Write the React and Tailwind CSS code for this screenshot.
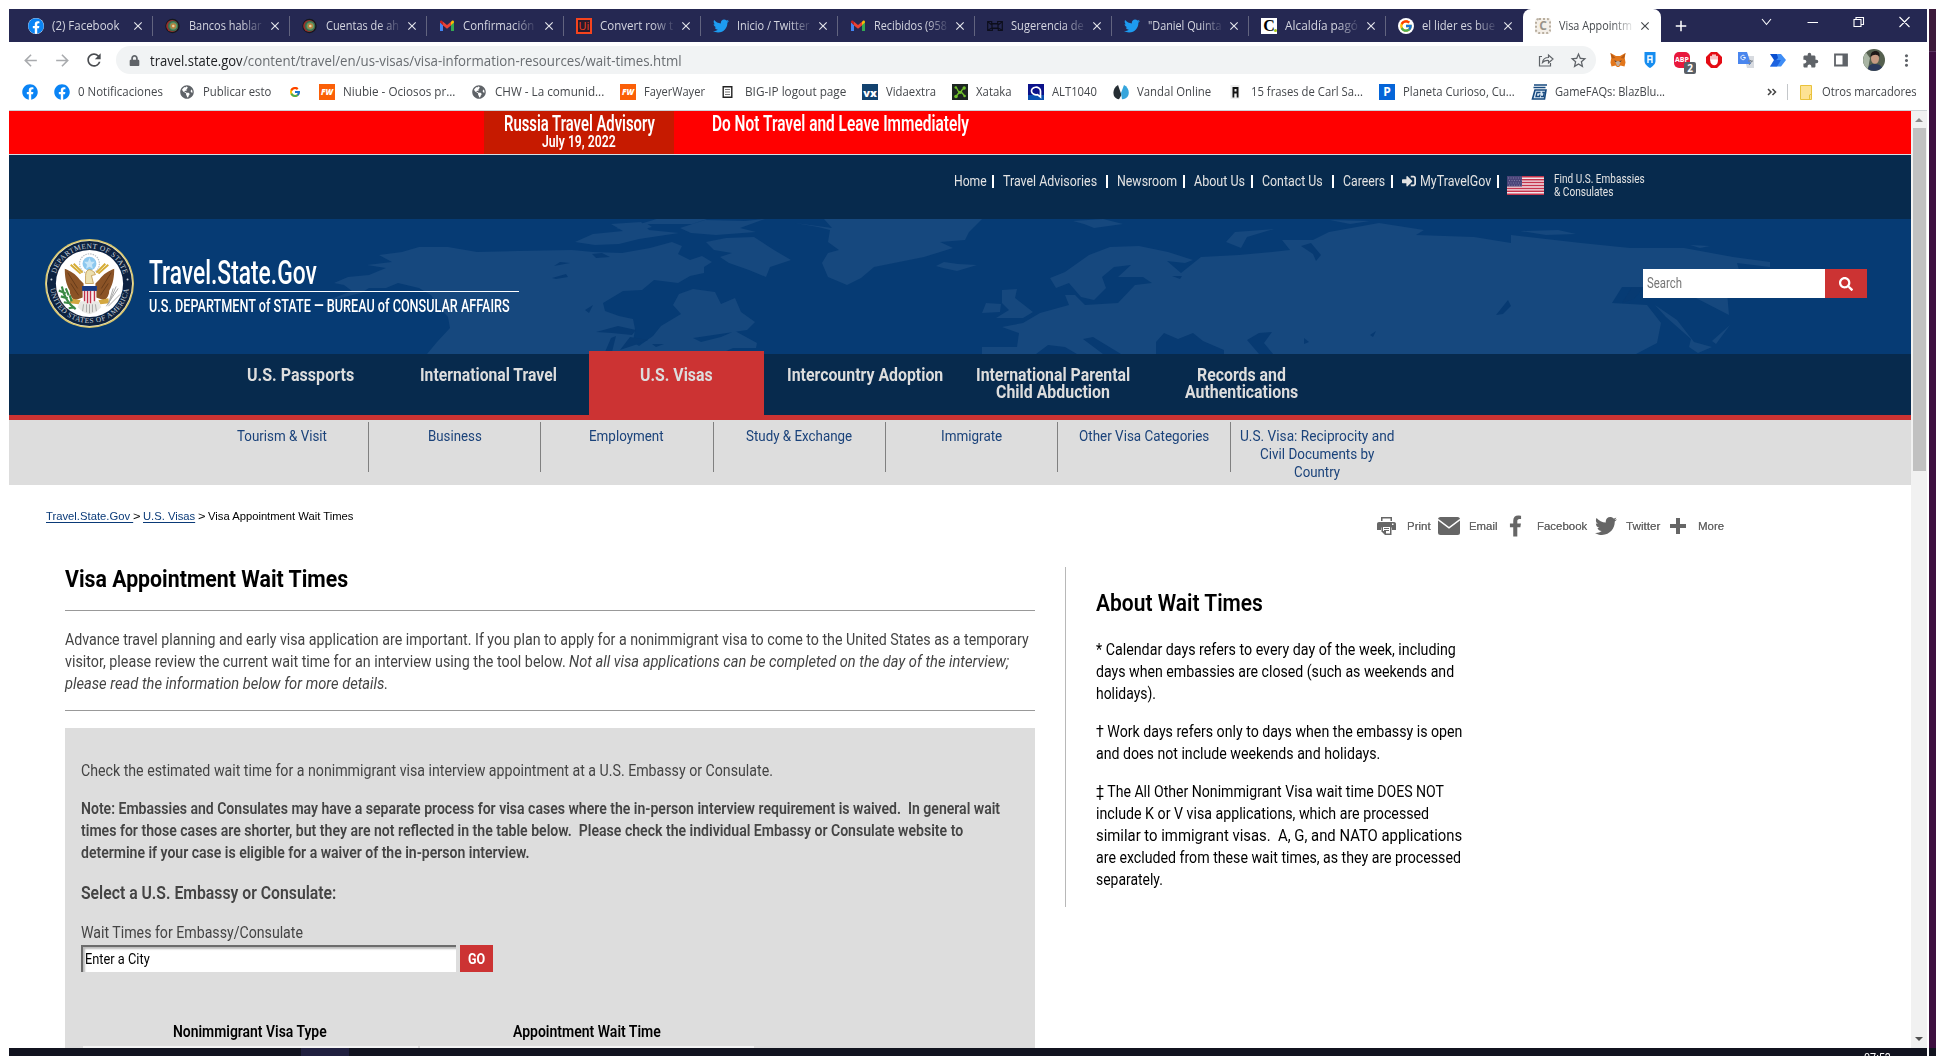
import React, { useLayoutEffect, useRef } from "react";
import {
  FaFacebook, FaTwitter, FaFacebookF, FaSearch, FaSignInAlt, FaLock, FaGlobeAmericas,
} from "react-icons/fa";
import { FcGoogle } from "react-icons/fc";
import {
  MdArrowBack, MdArrowForward, MdRefresh, MdClose, MdExtension, MdStarBorder, MdMoreVert, MdAdd,
} from "react-icons/md";

/* Condenses a line of text so that it fills the width of its box. */
function Fit({ className = "", children }) {
  const outer = useRef(null);
  const inner = useRef(null);
  useLayoutEffect(() => {
    const k = outer.current.clientWidth / inner.current.offsetWidth;
    inner.current.style.transform = `scaleX(${k})`;
  }, []);
  return (
    <span ref={outer} className={"block shrink-0 whitespace-pre " + className}>
      <span ref={inner} className="inline-block origin-left whitespace-pre">{children}</span>
    </span>
  );
}

/* ---------- small icons ---------- */
const Fb = () => (
  <span className="block size-4 rounded-full bg-white"><FaFacebook className="size-4 text-[#0a84f5]" /></span>
);
const Target = () => (
  <svg viewBox="0 0 16 16" className="size-4">
    <circle cx="7.5" cy="8" r="7.2" fill="#15171d" />
    <circle cx="7.2" cy="8" r="6" fill="#9c2f2c" />
    <circle cx="8" cy="8" r="5.2" fill="#3b6b4c" />
    <circle cx="8.3" cy="8" r="3.800" fill="#5f9a6a" />
    <circle cx="8.3" cy="8" r="2.800" fill="#b8803e" />
    <circle cx="8.3" cy="8" r="1.300" fill="#ecd0a0" />
  </svg>
);
const Gmail = () => (
  <svg viewBox="0 0 16 16" className="size-4">
    <path d="M1 4v9h3V7z" fill="#4285f4" />
    <path d="M15 4v9h-3V7z" fill="#34a853" />
    <path d="M1 4.5 4 7.2V3.8L3 2.8C2 2.2 1 3 1 4z" fill="#c5221f" />
    <path d="M15 4.5 12 7.2V3.8l1-1c1-.6 2 .2 2 1.2z" fill="#fbbc04" />
    <path d="M4 3.8 8 7l4-3.2v3.8L8 10.8 4 7.6z" fill="#ea4335" />
  </svg>
);
const Ui = () => (
  <span className="flex size-4 items-center justify-center border-2 border-[#f5441e] bg-[#2a1a2c] text-[11px] leading-none font-medium text-[#f5441e]">Ui</span>
);
const Tw = () => <FaTwitter className="size-4 text-[#1d9bf0]" />;
const Box = () => (
  <svg viewBox="0 0 16 16" className="size-4" fill="none" stroke="#0d0e1c" strokeWidth="1.200">
    <path d="M.7 3.500h4v2h6v-2h4.600v9h-4v-2h-6v2h-4.600z" /><path d="M5 6h6v4H5zM1 4l4 3M15 4l-4 3M1 12l4-2M15 12l-4-2" />
  </svg>
);
const CIcon = () => (
  <span className="relative flex size-4 items-center justify-center bg-white font-['Liberation_Serif'] text-[16px] leading-none font-bold text-black">
    C<i className="absolute right-0 bottom-0.5 size-[3px] rounded-full bg-[#a8c814]" />
  </span>
);
const GRound = () => (
  <span className="flex size-4 items-center justify-center rounded-full bg-white"><FcGoogle className="size-3.5" /></span>
);
const SealIcon = () => (
  <span className="flex size-4 items-center justify-center rounded-sm border-2 border-dotted border-[#b8ae9f] bg-[#f4efe8] text-[12px] leading-none font-bold text-[#989389]">C</span>
);
const Globe = () => <FaGlobeAmericas className="size-3.5 text-[#5f6368]" />;
const Fw = () => (
  <span className="flex size-4 items-center justify-center bg-[#fb5f07] text-[8px] font-black text-white italic">FW</span>
);
const Doc = () => (
  <svg viewBox="0 0 16 16" className="size-4" fill="none" stroke="#222" strokeWidth="1.400">
    <path d="M2.200 2.700h8.600v10.600H2.200z" /><path d="M4 5.500h5M4 8h5M4 10.500h5" stroke="#777" strokeWidth="1" />
  </svg>
);
const Vx = () => (
  <span className="flex size-4 items-center justify-center bg-[#12426f] text-[11px] leading-none font-black text-white">vx</span>
);
const Xat = () => (
  <svg viewBox="0 0 16 16" className="size-4">
    <path d="M0 0h16v16H0z" fill="#1c2422" />
    <path d="M4 3.500C6 5 5 7 7.500 8L4 12.500M12 4c-1.500 1-2.500 2-3 4.500 1.500 0 2 1.500 3.600 3.500" fill="none" stroke="#6fc02c" strokeWidth="1.300" />
    <g fill="#6fc02c"><circle cx="3.800" cy="3.500" r="1.300" /><circle cx="12.200" cy="4" r="1.700" /><circle cx="4" cy="12.500" r="1.800" /><circle cx="12.600" cy="12" r="1.300" /><circle cx="8" cy="8.300" r="1.600" /></g>
  </svg>
);
const Alt = () => (
  <svg viewBox="0 0 16 16" className="size-4">
    <path d="M0 0h16v16H0z" fill="#0b128a" /><path d="M0 11h16v5H0z" fill="#0a4fb0" />
    <path d="M12.500 13V7a4.500 3.800 0 1 0-3 3.600z" fill="none" stroke="#fff" strokeWidth="1.700" />
  </svg>
);
const Vandal = () => (
  <svg viewBox="0 0 16 16" className="size-4">
    <path d="M5 1C1 3-.5 8 1 12c1 2 3 3 5 3.300L8.500 11z" fill="#252d33" /><path d="M11 1c4 2 6 7 4 11-1 2-3 3-6 3.300L8 9z" fill="#35a5dc" />
  </svg>
);
const AIcon = () => (
  <svg viewBox="0 0 16 16" className="size-4"><path d="M3.500 1h9v14h-9z" fill="#eee" /><path d="M5.500 3h6v10.500H9.700V9.500H7.300v4H5.500z" fill="#111" /><path d="M7.500 5h2v2.500h-2z" fill="#eee" /></svg>
);
const PIcon = () => (
  <span className="flex size-4 items-center justify-center bg-[#0565d8] text-[12px] leading-none font-bold text-white">P</span>
);
const Gf = () => (
  <svg viewBox="0 0 16 16" className="size-4" fill="none" stroke="#17497f" strokeWidth="1.600">
    <path d="M3 1h13M2.500 3.500h12" /><path d="M4 6h11l-1.500 9H1.500z" fill="#dbe8f4" /><path d="M9.500 8.500H6L5 12.500h3.500l.5-2M10 12.500h2.500l.8-4h-2" strokeWidth="1.300" />
  </svg>
);

/* ---------- browser chrome ---------- */
const TABS = [
  ["(2) Facebook", Fb, true],
  ["Bancos hablar", Target],
  ["Cuentas de ah", Target],
  ["Confirmación", Gmail, false, true],
  ["Convert row t", Ui],
  ["Inicio / Twitter", Tw],
  ["Recibidos (958", Gmail],
  ["Sugerencia de", Box],
  ["\"Daniel Quinta", Tw],
  ["Alcaldía pagó", CIcon],
  ["el lider es bue", GRound],
];

function TabStrip() {
  return (
    <div className="flex h-[33px] bg-[#252852] pl-[7px] text-[12px] leading-[33px] text-[#d5d6e0]">
      {TABS.map(([title, Icon, short, mid], i) => (
        <div key={title} className="flex w-[137px] items-center pl-3">
          <Icon />
          <Fit className={"ml-2 [mask-image:linear-gradient(90deg,#000_72%,#0002)] " + (short ? "w-[68px] [mask-image:none]" : mid ? "w-[71px]" : "w-[73px]")}>{title}</Fit>
          <MdClose className={"size-[14px] text-[#e4e5ec] " + (short ? "ml-[11px]" : mid ? "ml-2" : "ml-1.5")} />
          {i < 10 && <i className="ml-auto h-5 w-px bg-[#62647f]" />}
        </div>
      ))}
      <div className="flex h-full w-[138px] items-center rounded-t-lg bg-white pl-3 text-[#45494d]">
        <SealIcon />
        <Fit className="ml-2 w-[73px] [mask-image:linear-gradient(90deg,#000_72%,#0002)]">Visa Appointm</Fit>
        <MdClose className="ml-1.5 size-[14px]" />
      </div>
      <MdAdd className="mt-2 ml-[11px] size-[18px] text-white" />
      <svg viewBox="0 0 164 33" className="ml-[68px] h-[33px] w-[164px]" fill="none" stroke="#fff" strokeWidth="1.100">
        <path d="m4 10 4.500 5.500L13 10M49.500 13.500h10.500M96 10.500h7v7h-7zM98 10.500V8.500h7.500v7h-2.500M141.500 8l10 10M151.500 8l-10 10" />
      </svg>
    </div>
  );
}

function Extensions() {
  return (
    <div className="ml-3.5 flex items-center gap-4">
      <svg viewBox="0 0 16 16" className="size-4">
        <path d="M.5 1 6 4h4l5.500-3-.8 5 .8 4.500-1 4-4-1L9 15H7l-1.500-1.500-4 1-1-4L1.300 6z" fill="#e2761b" />
        <path d="m.5 1 5 5-3.500.5zM15.500 1l-5 5 3.500.5z" fill="#b85a12" /><path d="M5.500 10 8 9l2.500 1L9 14H7z" fill="#c0ad9e" /><path d="m4 8.500 2.500.5L6 10zM12 8.500 9.500 9l.5 1z" fill="#233447" />
      </svg>
      <svg viewBox="0 0 16 16" className="size-4"><path d="M2.500 0h11v9c0 3-3 5.500-5.500 7-2.500-1.500-5.500-4-5.500-7z" fill="#168df0" /><path d="M6 11V4h4v7M6 7.500h4" fill="none" stroke="#fff" strokeWidth="1.400" /></svg>
      <div className="relative size-4">
        <span className="flex size-4 items-center justify-center rounded-[5px] bg-[#e8173c] text-[7px] font-bold text-white">ABP</span>
        <span className="absolute top-2.5 left-2.5 flex h-3 w-3 items-center justify-center rounded-xs bg-[#5a5f66] text-[10px] leading-none font-bold text-white">2</span>
      </div>
      <svg viewBox="0 0 16 16" className="size-4"><path d="M5 0h6l5 5v6l-5 5H5l-5-5V5z" fill="#e40b14" /><path d="M5 8V4.500M7 8V3M9 8V3M11 9V4.500" stroke="#fff" strokeWidth="1.500" strokeLinecap="round" /><path d="M4.300 7.500h7.400V10c0 2-1.500 3.200-3.400 3.200S4.300 11.500 4.300 9z" fill="#fff" /></svg>
      <svg viewBox="0 0 16 16" className="size-4"><path d="M6 4h10v12H9z" fill="#d8dbe0" /><path d="M0 0h9l4 12H0z" fill="#4a86ee" /><path d="M7.500 5.500H5.300M7.300 5.500a2.200 2.200 0 1 1-.8-1.700" stroke="#fff" fill="none" /><path d="M10 9h5M12.500 8v1M11 13l3-4" stroke="#7a828c" /></svg>
      <svg viewBox="0 0 16 16" className="size-4"><path d="M0 2h7l4 6H4z" fill="#0a4fd0" /><path d="M7 2h4l5 6-5 6.500H0L8 6z" fill="#3f8df5" /><path d="M4 8h7l-4 6.500H0z" fill="#1d63e0" /></svg>
      <MdExtension className="size-[17px] text-[#5f6368]" />
      <svg viewBox="0 0 16 16" className="-ml-0.5 size-4"><path d="M2 2.500h12v11H2z" fill="none" stroke="#5f6368" strokeWidth="1.800" /><path d="M9.500 2.500H14v11H9.500z" fill="#5f6368" /></svg>
      <svg viewBox="0 0 22 22" className="-mx-0.5 size-[22px]">
        <circle cx="11" cy="11" r="11" fill="#55604f" /><path d="M3 3.500A11 11 0 0 0 5 20L7 9z" fill="#a9b5a4" />
        <path d="M5 20c1-5 4-5 7-5s6 1 7 3.500A11 11 0 0 1 5 20z" fill="#2c3a5c" /><ellipse cx="12" cy="9.500" rx="4" ry="5.300" fill="#c79b83" /><path d="M7.500 8c0-4 2-6 5-6s4.500 2 4 6c-2-3-6-3-9 0z" fill="#1f1a19" />
      </svg>
      <MdMoreVert className="-ml-[2px] size-[19px] text-[#5f6368]" />
    </div>
  );
}

function Toolbar() {
  return (
    <div className="flex h-[36px] items-center bg-white">
      <MdArrowBack className="ml-3 size-[19px] text-[#a9abae]" />
      <MdArrowForward className="ml-[13px] size-[19px] text-[#a9abae]" />
      <MdRefresh className="ml-3 size-5 text-[#4a4d51]" />
      <div className="ml-3 flex h-7 w-[1480px] items-center rounded-full bg-[#f1f3f4] pl-3 text-[14px]">
        <FaLock className="ml-px size-[11px] text-[#5f6368]" />
        <Fit className="ml-[10px] w-[93px] text-[#202124]">travel.state.gov</Fit>
        <Fit className="w-[439px] text-[#686c70]">/content/travel/en/us-visas/visa-information-resources/wait-times.html</Fit>
        <svg viewBox="0 0 16 16" className="ml-auto size-4" fill="none" stroke="#5f6368" strokeWidth="1.200">
          <path d="M4 4.500H1.500v9.500h11V11M4.500 10.500C5 7 7 5.500 10.500 5.500V3L15 7l-4.500 4V8.500C8 8.300 6 9 4.500 10.500z" />
        </svg>
        <MdStarBorder className="mr-2 ml-[15px] size-[19px] text-[#5f6368]" />
      </div>
      <Extensions />
    </div>
  );
}

function Mark({ icon: Icon, className, children }) {
  return (
    <div className="flex shrink-0 items-center">
      <span className="flex size-4 items-center justify-center"><Icon /></span>
      {children && <Fit className={"ml-2 " + className}>{children}</Fit>}
    </div>
  );
}

function Bookmarks() {
  return (
    <div className="flex h-[33px] items-center gap-4 border-b border-[#cdd3d6] bg-white pb-1 pl-[13px] text-[12px] text-[#44474b]">
      <Mark icon={Fb} />
      <Mark icon={Fb} className="w-[85px]">0 Notificaciones</Mark>
      <Mark icon={Globe} className="w-[68px]">Publicar esto</Mark>
      <Mark icon={FcGoogle} />
      <Mark icon={Fw} className="w-[112px]">Niubie - Ociosos pr...</Mark>
      <Mark icon={Globe} className="w-[109px]">CHW - La comunid...</Mark>
      <Mark icon={Fw} className="w-[61px]">FayerWayer</Mark>
      <Mark icon={Doc} className="w-[101px]">BIG-IP logout page</Mark>
      <Mark icon={Vx} className="w-[50px]">Vidaextra</Mark>
      <Mark icon={Xat} className="w-[36px]">Xataka</Mark>
      <Mark icon={Alt} className="w-[45px]">ALT1040</Mark>
      <Mark icon={Vandal} className="w-[74px]">Vandal Online</Mark>
      <Mark icon={AIcon} className="w-[112px]">15 frases de Carl Sa...</Mark>
      <Mark icon={PIcon} className="w-[112px]">Planeta Curioso, Cu...</Mark>
      <Mark icon={Gf} className="w-[110px]">GameFAQs: BlazBlu...</Mark>
      <div className="mr-2.5 ml-auto flex items-center">
        <svg viewBox="0 0 10 8" className="h-2 w-2.5" fill="none" stroke="#444" strokeWidth="1.500"><path d="m1 1 3 3-3 3M5.500 1l3 3-3 3" /></svg>
        <i className="ml-2.5 h-4 w-px bg-[#c4c7ca]" />
        <svg viewBox="0 0 12 15" className="ml-3 h-[15px] w-3"><path d="M.5.5h11v14H.5z" fill="#fde293" stroke="#e9c23c" /><path d="M9.500 14v-4l2-1" fill="none" stroke="#e9c23c" /></svg>
        <Fit className="ml-2.5 w-[95px]">Otros marcadores</Fit>
      </div>
    </div>
  );
}

/* ---------- site header ---------- */
function Banner() {
  return (
    <div className="flex h-[44px] border-b border-[#d8dfe4] bg-[#ff0000] font-semibold text-white">
      <div className="ml-[475px] flex w-[190px] flex-col items-center bg-[#c61a00]">
        <Fit className="mt-[3px] w-[151px] text-[21.500px] leading-[20px]">Russia Travel Advisory</Fit>
        <Fit className="w-[74px] text-[16.500px] leading-[15px]">July 19, 2022</Fit>
      </div>
      <Fit className="mt-[3px] ml-[38px] w-[257px] text-[21.500px] leading-[20px]">Do Not Travel and Leave Immediately</Fit>
    </div>
  );
}

const Bar = () => <i className="mt-[3px] h-[13px] w-[2px] shrink-0 bg-white" />;

function Flag() {
  return (
    <svg viewBox="0 0 37 19" className="mt-1 ml-2 h-[19px] w-[37px]" preserveAspectRatio="none">
      <path d="M0 0h37v19H0z" fill="#f3e6ea" />
      <path d="M0 .8h37M0 3.700h37M0 6.600h37M0 9.500h37M0 12.400h37M0 15.300h37M0 18.200h37" stroke="#c6334c" strokeWidth="1.500" />
      <path d="M0 0h15v10.500H0z" fill="#4a4478" />
      <path d="M1 2h14M2 4.500h13M1 7h14M2 9.200h13" stroke="#8d88b0" strokeWidth=".8" strokeDasharray="1 1.500" />
    </svg>
  );
}

function TopLinks() {
  return (
    <div className="flex h-16 items-start bg-[#072a4d] pt-[17px] pl-[945px] text-[14px] leading-[19px] text-[#e3e3e3]">
      <Fit className="mr-[5px] w-[33px]">Home</Fit><Bar />
      <Fit className="mr-[9px] ml-[9px] w-[94px]">Travel Advisories</Fit><Bar />
      <Fit className="mr-1.5 ml-[9px] w-[60px]">Newsroom</Fit><Bar />
      <Fit className="mr-1.5 ml-[9px] w-[51px]">About Us</Fit><Bar />
      <Fit className="mr-[9px] ml-[9px] w-[61px]">Contact Us</Fit><Bar />
      <Fit className="mr-1.5 ml-[9px] w-[42px]">Careers</Fit><Bar />
      <FaSignInAlt className="mt-0.5 mr-1 ml-[9px] size-[14px]" />
      <Fit className="mr-1.5 w-[71px]">MyTravelGov</Fit><Bar />
      <Flag />
      <div className="ml-2.5 text-[12px] leading-[13px]">
        <Fit className="mt-px w-[91px]">Find U.S. Embassies</Fit>
        <Fit className="w-[59px]">&amp; Consulates</Fit>
      </div>
    </div>
  );
}

function WorldMap() {
  return (
    <svg viewBox="9 219 1902 135" className="absolute inset-0 h-full w-full" fill="#16487e">
      <path d="M427 354l10-12 13-14-2-11-9-10-8-12-12-7-21-5-12 5-17 0-8 5-38 9 29-11-8-6-10-2 14-6 21-2 17-7-19-3 25-3-13-7 23-3 17-5 29 0 29 5 41-1 54-1 21 2 29 1 28-5 22-6 10 4-4 8 12 6 12-4 10 6-8 5 0 6-14 3-12 7-24-3-12 10-19 1-20 12 2 8 14 5 14 3 2 10-2 13 6 4 14-10 8-10 10-6 10-6-8-9 6-11 14-5 22 3 6 12 14-6 6 14 14 10-8 8-54 8 8 4 20-5 14-6 22 12-1 5-23 0-25 11-20 2-20 5-6 4z" />
      <path d="M575 242l18-8 30-3-12-7 30-2 8 8 30 3-40 6-20 5-24 1zM640 224l20-6h50l-18 6zM680 228l25-8 40 1 20-2-25 9 16 4-40 3-25-2zM616 228l30-5 6 4-20 5z" />
      <path d="M706 242l20-4 28-1 20 13 17 10-21 7-4 10-17-7-20-7-9-6 12-4-18-3z" />
      <path d="M795 223l37 5-8-9h158l-13 13-4 8-25 2 13 6-29 9-25 5-25 5-13 11-14 7-19-8-6-14 6-10 11-3-11-8 2-12-12-3z" />
      <path d="M936 266l8-4 14 2 19 1-20 6-14-3zM1073 221l30-2 20 5-29 4-10-4zM1226 242l9-10 39-3-27 8-6 11z" />
      <path d="M1002 290l15-1-2 9 18 14-10 6-27 0 13-8-7-7zM982 313l4-10 15 1-1 8z" />
      <path d="M982 354v-7h35l2-14-17-6 21-4 17-10 29-8-4-10h10l10 10 33-2 17-18 17-2-9-6-25 0 13-12-17 2-12 10 4 11-12 12-13-3-12-14-13 5-6-10 15-6 24-17 21-8 29-1 29 6 25 8-8 3-18-2 14 12 20-16 38-2 33-3 18-2-8-10 31 0 16-8 50-9 45 7-8 5 58 2 37 6 0-8 70 8 49 5 54 0 49 9 37 5v5l-33-4 2 7-12 22 2 23-33-17-62-11-12 0-10 16 35 2 14 18-4 20-21 11z" />
      <path d="M1655 305l22 15 17 22 18 5-14 6-9-6 2-8-25-22zM1712 341l18-16-14 19zM1520 231l38-1 18 4-30 1zM1330 220l40 1-20 3zM1690 245l20 1-10 2z" />
      <g fill="#073a72">
        <path d="M1156 354l0-12 8-9 14 6 15-6 10 8 21 9v4zM1247 340l12-7 13-1-8 11 9 11h-14zM1036 354l12-9 17 2 12 7zM1083 339l10-2 28 17h-18zM1496 315l12-15 3 6-8 8zM1304 338l5 4-5 2zM1370 335l6-4-3 6zM1172 276l10 0-2 3zM1311 243l10 12-5 6-3-7-12-8z" />
        <path d="M1644 287l-12 0-10 16 12-4zM596 332l22-6 18 4-4 5-20-2zM605 352l6-14 5-2-4 16zM620 350l10-13 18 3-10 4zM585 310l8-5-4 8zM552 278l14-4 2 3-12 2zM560 262l10 1-16 3zM592 254l10-1 8 4-14 1zM652 344l12 0-8 3z" />
      </g>
    </svg>
  );
}

function Seal() {
  return (
    <svg viewBox="0 0 90 90" className="size-[89px]">
      <defs>
        <path id="arcTop" d="M9.500 45a35.500 35.500 0 0 1 71 0" />
        <path id="arcBottom" d="M5 45a40 40 0 0 0 80 0" />
      </defs>
      <circle cx="45" cy="45" r="45" fill="#d8c56a" />
      <circle cx="45" cy="45" r="43.600" fill="#f4f0d0" />
      <circle cx="45" cy="45" r="43" fill="#0d2240" />
      <circle cx="45" cy="45" r="34" fill="#fff" />
      <g fill="#c9d2dc" fontFamily="Liberation Serif" fontSize="7.500">
        <text><textPath href="#arcTop" startOffset="10" textLength="92">DEPARTMENT OF STATE</textPath></text>
        <text><textPath href="#arcBottom" startOffset="5" textLength="115">UNITED STATES OF AMERICA</textPath></text>
        <circle cx="6.500" cy="41" r="1" /><circle cx="83.500" cy="41" r="1" />
      </g>
      <circle cx="45" cy="25" r="10" fill="none" stroke="#b9bec3" strokeWidth="1.200" strokeDasharray="1.500 1" />
      <circle cx="45" cy="25" r="7" fill="#8cc8ef" />
      <path d="M45 19l1.500 4h4l-3 3 1 4-3.500-2-3.500 2 1-4-3-3h4z" fill="#c8e6f8" />
      <path d="M26 26l10 9M64 26l-10 9M29 25l9 9M61 25l-9 9" stroke="#d6ac35" strokeWidth="2" />
      <path d="M20 30c5 2 11 5 15 11l4 4v14l-9 3c-3-2-5-6-5-10-4-7-5-14-5-22zM70 30c-5 2-11 5-15 11l-4 4v14l9 3c3-2 5-6 5-10 4-7 5-14 5-22z" fill="#8b5326" />
      <path d="M23 34l10 16M26 45l8 12M67 34L57 50M64 45l-8 12" stroke="#5c3517" strokeWidth=".8" />
      <path d="M41 37c0-4 2-6 4-6s5 2 6 5l-4 1 2 8h-8z" fill="#ece0b0" stroke="#b98a35" strokeWidth=".7" />
      <path d="M36 63h18l3 6-6 5-6 2-6-2-6-5z" fill="#e8e8e4" /><path d="M39 66l-1 7M42 66v8M45 66v9M48 66v8M51 66l1 7" stroke="#9a9a98" strokeWidth=".8" />
      <path d="M26 60l10 2-2 4-9-1zM64 60l-10 2 2 4 9-1z" fill="#d3a741" />
      <path d="M38 48h14v12c0 3-4 4-7 6-3-2-7-3-7-6z" fill="#f7f2f2" />
      <path d="M40 52v11M43 52v13M46 52v13M50 52v11" stroke="#c2304a" strokeWidth="1.400" />
      <path d="M37.500 47.500h15v5h-15z" fill="#173a83" />
      <path d="M17 48c2 10 6 17 14 23M14 52l7 3M16 58l7 2M19 64l6 1M24 57l-3-7M27 63l-2-6M24 70l6-1" stroke="#3b8a45" strokeWidth="2.200" fill="none" />
      <path d="M74 50L62 68M72 48l-8 18M69 50l-5 16M76 56L64 68" stroke="#a9a9a9" strokeWidth="1" />
    </svg>
  );
}

function Masthead() {
  return (
    <div className="relative h-[135px] bg-[#063b74]">
      <WorldMap />
      <div className="relative flex pl-9">
        <div className="mt-5"><Seal /></div>
        <div className="ml-[15px] w-[370px] pt-[36px] text-white">
          <Fit className="w-[168px] text-[33.500px] leading-[36px] font-medium">Travel.State.Gov</Fit>
          <div className="h-px bg-white" />
          <Fit className="mt-[5px] w-[361px] text-[18px] leading-[18px] font-medium">U.S. DEPARTMENT of STATE — BUREAU of CONSULAR AFFAIRS</Fit>
        </div>
        <div className="mt-[50px] mr-11 ml-auto flex h-[29px] w-[224px] bg-white">
          <Fit className="ml-1 w-[35px] text-[14px] leading-[29px] text-[#757575]">Search</Fit>
          <span className="ml-auto flex w-[42px] items-center justify-center bg-[#cc3333]"><FaSearch className="size-[14px] text-white" /></span>
        </div>
      </div>
    </div>
  );
}

function MainNav() {
  return (
    <div className="flex h-[66px] border-b-5 border-[#cc3333] bg-[#072a4d] pl-[197px] text-[18px] leading-[17px] font-bold text-[#dddddd]">
      <div className="flex w-[188.300px] justify-center pt-3"><Fit className="w-[107px]">U.S. Passports</Fit></div>
      <div className="flex w-[188.300px] justify-center pt-3"><Fit className="w-[137px]">International Travel</Fit></div>
      <div className="relative mx-[6.600px] -mt-[3px] flex w-[175px] justify-center bg-[#cc3333] pt-[15px]"><Fit className="w-[73px]">U.S. Visas</Fit></div>
      <div className="flex w-[188.300px] justify-center pt-3"><Fit className="w-[156px]">Intercountry Adoption</Fit></div>
      <div className="flex w-[188.300px] flex-col items-center pt-3"><Fit className="w-[154px]">International Parental</Fit><Fit className="w-[114px]">Child Abduction</Fit></div>
      <div className="flex w-[188.300px] flex-col items-center pt-3"><Fit className="w-[89px]">Records and</Fit><Fit className="w-[113px]">Authentications</Fit></div>
    </div>
  );
}

function SubNav() {
  const cell = "mt-0.5 flex h-[50px] w-[172.400px] shrink-0 flex-col items-center border-r border-[#808080] pt-[5px]";
  return (
    <div className="flex h-[65px] bg-[#dddddd] pl-[187.500px] text-[15px] leading-[18px] text-[#1a427a]">
      <div className={cell}><Fit className="w-[90px]">Tourism &amp; Visit</Fit></div>
      <div className={cell}><Fit className="w-[54px]">Business</Fit></div>
      <div className={cell}><Fit className="w-[75px]">Employment</Fit></div>
      <div className={cell}><Fit className="w-[106px]">Study &amp; Exchange</Fit></div>
      <div className={cell}><Fit className="w-[61px]">Immigrate</Fit></div>
      <div className={cell}><Fit className="w-[130px]">Other Visa Categories</Fit></div>
      <div className="mt-0.5 flex w-[172px] flex-col items-center pt-[5px]">
        <Fit className="w-[154px]">U.S. Visa: Reciprocity and</Fit>
        <Fit className="w-[114px]">Civil Documents by</Fit>
        <Fit className="w-[46px]">Country</Fit>
      </div>
    </div>
  );
}

/* ---------- page content ---------- */
function PrintIcon() {
  return (
    <svg viewBox="0 0 19 18" className="h-[18px] w-[19px]" fill="#666">
      <path d="M4 0h11v4h-1.500V1.500h-8V4H4z" />
      <path d="M2 5h15c1.200 0 2 .8 2 2v6h-4v-2.500H4V13H0V7c0-1.200.8-2 2-2zm13 1.500v1.500h1.500V6.500z" fillRule="evenodd" />
      <path d="M4.500 9.500h10V18H8l-3.500-3.500z" /><path d="M6 10h7v6.500H9V14H6z" fill="#fff" /><path d="M7 11h5v1H7zM7 13h5v1H7z" />
    </svg>
  );
}

function CrumbRow() {
  return (
    <div className="flex h-[82px] font-['Liberation_Sans'] text-[11px] leading-[14px]">
      <div className="flex pt-[23.500px] pl-[37px] text-black">
        <Fit className="w-[87px] text-[#0a3a78]"><span className="underline underline-offset-2">Travel.State.Gov </span></Fit>
        <Fit className="w-[7px]">{">"}</Fit>
        <Fit className="ml-[3px] w-[52px] text-[#0a3a78]"><span className="underline underline-offset-2">U.S. Visas</span></Fit>
        <Fit className="mx-[3px] w-[7px]">{">"}</Fit>
        <Fit className="w-[145px]">Visa Appointment Wait Times</Fit>
      </div>
      <div className="mt-[30px] mr-[187px] ml-auto flex h-[22px] items-center self-start text-[#666666] [text-shadow:0_0_0.5px_#666]">
        <PrintIcon /><Fit className="ml-[11px] w-6">Print</Fit>
        <svg viewBox="0 0 22 18" className="ml-[7px] h-[18px] w-[22px]"><rect width="22" height="18" rx="2.500" fill="#666" /><path d="m0 2.500 11 8.300 11-8.300" fill="none" stroke="#fff" strokeWidth="1.500" /></svg>
        <Fit className="ml-[9px] w-[29px]">Email</Fit>
        <FaFacebookF className="ml-[11px] h-[22px] w-[13px]" /><Fit className="ml-[15px] w-[50px]">Facebook</Fit>
        <FaTwitter className="ml-2 size-[22px]" /><Fit className="ml-[9px] w-[34px]">Twitter</Fit>
        <svg viewBox="0 0 16 16" className="ml-2.5 size-4"><path d="M6 0h4v6h6v4h-6v6H6v-6H0V6h6z" fill="#666" /></svg>
        <Fit className="ml-3 w-[26px]">More</Fit>
      </div>
    </div>
  );
}

function LookupPanel() {
  return (
    <div className="mt-[17px] flex h-[320px] flex-col bg-[#dddddd] pt-8 pl-4 text-[16px] leading-[22px] text-[#444444]">
      <Fit className="w-[692px]">Check the estimated wait time for a nonimmigrant visa interview appointment at a U.S. Embassy or Consulate.</Fit>
      <div className="mt-4 font-semibold">
        <Fit className="w-[919px]">Note: Embassies and Consulates may have a separate process for visa cases where the in-person interview requirement is waived.  In general wait</Fit>
        <Fit className="w-[882px]">times for those cases are shorter, but they are not reflected in the table below.  Please check the individual Embassy or Consulate website to</Fit>
        <Fit className="w-[448px]">determine if your case is eligible for a waiver of the in-person interview.</Fit>
      </div>
      <Fit className="mt-[18px] w-[255px] text-[17.500px] font-semibold">Select a U.S. Embassy or Consulate:</Fit>
      <Fit className="mt-[18px] w-[222px]">Wait Times for Embassy/Consulate</Fit>
      <div className="mt-px flex">
        <div className="h-[27px] w-[375px] border-t-2 border-l-2 border-[#6c6c6c] bg-white pl-0.5 text-[14px] leading-[24px] text-black shadow-[inset_2px_2px_2px_#bbb]">
          <Fit className="w-[65px]">Enter a City</Fit>
        </div>
        <div className="ml-1 flex h-[27px] w-[33px] items-center justify-center bg-[#cc3333] text-[14px] font-bold text-white"><Fit className="w-[17px]">GO</Fit></div>
      </div>
      <div className="mt-[49px] flex font-semibold text-black">
        <Fit className="ml-[92px] w-[154px]">Nonimmigrant Visa Type</Fit>
        <Fit className="ml-[186px] w-[148px]">Appointment Wait Time</Fit>
      </div>
      <div className="mt-[3px] ml-0.5 flex h-0.5 w-[671px] gap-0.5"><i className="flex-1 bg-[#f4f4f4]" /><i className="flex-1 bg-[#f4f4f4]" /></div>
    </div>
  );
}

function Content() {
  return (
    <div className="flex pl-14">
      <div className="w-[970px] text-[16px] leading-[22px] text-[#444444]">
        <Fit className="-mt-0.5 w-[283px] text-[24px] leading-7 font-bold text-black">Visa Appointment Wait Times</Fit>
        <div className="mt-[17px] h-px bg-[#999999]" />
        <div className="mt-[17.500px]">
          <Fit className="w-[964px]">Advance travel planning and early visa application are important. If you plan to apply for a nonimmigrant visa to come to the United States as a temporary</Fit>
          <div className="flex">
            <Fit className="w-[504px]">visitor, please review the current wait time for an interview using the tool below. </Fit>
            <Fit className="w-[440px] italic">Not all visa applications can be completed on the day of the interview;</Fit>
          </div>
          <Fit className="w-[323px] italic">please read the information below for more details.</Fit>
        </div>
        <div className="mt-[15.500px] h-px bg-[#999999]" />
        <LookupPanel />
      </div>
      <div className="ml-[30px] h-[340px] border-l border-[#b8b8b8] pt-[22px] pl-[30px] text-[16px] leading-[22px] text-black">
        <Fit className="w-[167px] text-[23.500px] leading-7 font-semibold">About Wait Times</Fit>
        <div className="mt-[21.500px] flex flex-col gap-4">
          <div>
            <Fit className="w-[360px]">* Calendar days refers to every day of the week, including</Fit>
            <Fit className="w-[358px]">days when embassies are closed (such as weekends and</Fit>
            <Fit className="w-[60px]">holidays).</Fit>
          </div>
          <div>
            <Fit className="w-[366px]">† Work days refers only to days when the embassy is open</Fit>
            <Fit className="w-[284px]">and does not include weekends and holidays.</Fit>
          </div>
          <div>
            <Fit className="w-[348px]">‡ The All Other Nonimmigrant Visa wait time DOES NOT</Fit>
            <Fit className="w-[333px]">include K or V visa applications, which are processed</Fit>
            <Fit className="w-[366px]">similar to immigrant visas.  A, G, and NATO applications</Fit>
            <Fit className="w-[365px]">are excluded from these wait times, as they are processed</Fit>
            <Fit className="w-[67px]">separately.</Fit>
          </div>
        </div>
      </div>
    </div>
  );
}

function Scrollbar() {
  return (
    <div className="flex w-4 flex-col items-center bg-[#f1f1f1] py-[7px]">
      <svg viewBox="0 0 8 4" className="h-1 w-2"><path d="M0 4l4-4 4 4z" fill="#8a8a8a" /></svg>
      <div className="mt-1.5 h-[343px] w-[13px] bg-[#c1c1c1]" />
      <svg viewBox="0 0 8 4" className="mt-auto h-1 w-2"><path d="M0 0l4 4 4-4z" fill="#505050" /></svg>
    </div>
  );
}

export default function App() {
  return (
    <div className="flex h-[1056px] w-[1936px] overflow-hidden bg-white pt-[9px] pl-[9px] font-['Roboto',sans-serif]">
      <div className="flex w-[1918px] flex-col">
        <div className="font-['Open_Sans','Noto_Sans',sans-serif]">
          <TabStrip />
          <Toolbar />
          <Bookmarks />
        </div>
        <div className="flex h-[937px]">
          <div className="w-[1902px] overflow-hidden">
            <Banner />
            <TopLinks />
            <Masthead />
            <MainNav />
            <SubNav />
            <CrumbRow />
            <Content />
          </div>
          <Scrollbar />
        </div>
        <div className="flex h-2 overflow-hidden bg-[#11131f]">
          <i className="ml-[292px] w-12 bg-[#20203f]" />
          <Fit className="mt-[3.500px] mr-9 ml-auto w-[27px] text-[12px] leading-3 text-white">07:53</Fit>
        </div>
      </div>
      <div className="ml-0.5 flex w-[7px] flex-col bg-[#3d0f3f]">
        <div className="h-[43px] border-b border-[#5a3560] bg-[#3c1a3b]" />
        <div className="mt-auto h-2 bg-[#11131f]" />
      </div>
    </div>
  );
}
